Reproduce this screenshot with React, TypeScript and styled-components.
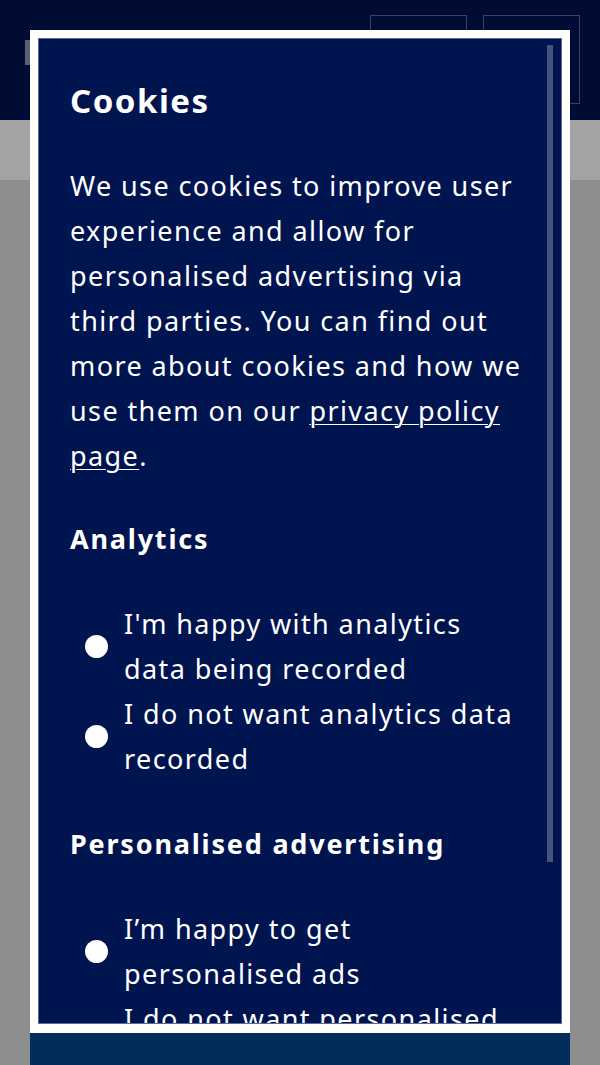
import styled, { createGlobalStyle } from 'styled-components'

const GlobalStyle = createGlobalStyle`
  html, body {
    margin: 0;
    padding: 0;
    height: 100%;
    overflow: hidden;
    background: #fff;
    font-family: 'Noto Sans', 'Open Sans', sans-serif;
  }
`

const Page = styled.div`
  min-height: 1065px;
  display: flex;
  flex-direction: column;
`

const Header = styled.header`
  height: 120px;
  display: flex;
  align-items: flex-start;
  padding: 15px 20px 0 25px;
  box-sizing: border-box;
  background: #001450;
  gap: 16px;
`

const Logo = styled.div`
  width: 60px;
  height: 25px;
  margin-top: 25px;
  background: linear-gradient(90deg, #8e97b2 0 5px, transparent 5px);
  flex: 0 0 auto;
`

const HeaderSpacer = styled.div`
  flex: 1;
`

const HeaderButton = styled.button`
  width: 97px;
  height: 89px;
  border: 1px solid #5d6a99;
  background: transparent;
  padding: 0;
`

const Band = styled.div`
  height: 60px;
  background: #fff;
`

const Body = styled.main`
  flex: 1;
  background: #dedede;
`

const Overlay = styled.div`
  position: fixed;
  inset: 0;
  background: rgba(0, 0, 0, 0.36);
`

const Modal = styled.div`
  position: fixed;
  top: 30px;
  left: 30px;
  width: 540px;
  display: flex;
  flex-direction: column;
`

const Frame = styled.div`
  background: #fff;
  padding: 8px 8px 9px 8px;
`

const Panel = styled.section`
  position: relative;
  height: 986px;
  overflow: hidden;
  background: #001450;
  border: 1px solid #5a6a95;
  box-sizing: border-box;
  color: #fff;
  padding: 40px 31px 0 31px;
  letter-spacing: 1.4px;
`

const Thumb = styled.div`
  position: absolute;
  top: 6px;
  right: 8px;
  width: 6px;
  height: 817px;
  background: #46557f;
`

const Title = styled.h2`
  margin: 0 0 41px;
  font-size: 33px;
  line-height: 43px;
  font-weight: 700;
  letter-spacing: 1.5px;
`

const Text = styled.p`
  margin: 0 0 38px;
  font-size: 27px;
  line-height: 45px;
`

const PolicyLink = styled.a`
  color: #fff;
  text-decoration: underline;
  text-underline-offset: 3px;
  text-decoration-thickness: 1px;
`

const GroupTitle = styled.h3`
  margin: 0 0 40px;
  font-size: 27px;
  line-height: 45px;
  font-weight: 700;
  letter-spacing: 1.8px;
`

const Options = styled.div`
  display: flex;
  flex-direction: column;
  padding-left: 15px;
  margin-bottom: 40px;
`

const Option = styled.label`
  display: flex;
  align-items: center;
  gap: 16px;
  font-size: 27px;
  line-height: 45px;
`

const Radio = styled.input.attrs({ type: 'radio' })`
  appearance: none;
  margin: 0;
  flex: 0 0 auto;
  width: 23px;
  height: 23px;
  border-radius: 50%;
  background: #fff;
`

const Footer = styled.div`
  height: 40px;
  background: #002d5a;
`

type Choice = { name: string; labels: string[] }

const groups: { title: string; choice: Choice }[] = [
  {
    title: 'Analytics',
    choice: {
      name: 'analytics',
      labels: [
        "I'm happy with analytics data being recorded",
        'I do not want analytics data recorded',
      ],
    },
  },
  {
    title: 'Personalised advertising',
    choice: {
      name: 'ads',
      labels: [
        'I’m happy to get personalised ads',
        'I do not want personalised ads',
      ],
    },
  },
]

export default function App() {
  return (
    <>
      <GlobalStyle />
      <Page>
        <Header>
          <Logo />
          <HeaderSpacer />
          <HeaderButton aria-label="Search" />
          <HeaderButton aria-label="Menu" />
        </Header>
        <Band />
        <Body />
      </Page>
      <Overlay />
      <Modal role="dialog" aria-label="Cookies">
        <Frame>
          <Panel>
            <Thumb />
            <Title>Cookies</Title>
            <Text>
              We use cookies to improve user experience and allow for
              personalised advertising via third parties. You can find out more
              about cookies and how we use them on our{' '}
              <PolicyLink href="#">privacy policy page</PolicyLink>.
            </Text>
            {groups.map((g) => (
              <div key={g.title}>
                <GroupTitle>{g.title}</GroupTitle>
                <Options>
                  {g.choice.labels.map((l) => (
                    <Option key={l}>
                      <Radio name={g.choice.name} />
                      <span>{l}</span>
                    </Option>
                  ))}
                </Options>
              </div>
            ))}
          </Panel>
        </Frame>
        <Footer />
      </Modal>
    </>
  )
}
